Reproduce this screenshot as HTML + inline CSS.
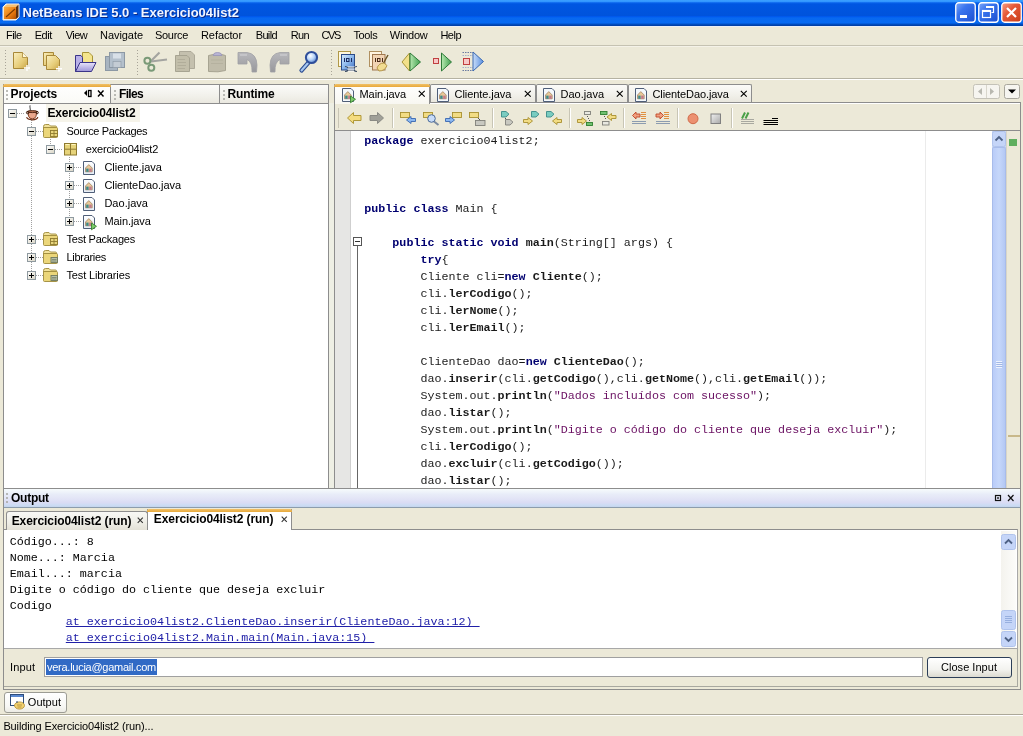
<!DOCTYPE html>
<html><head><meta charset="utf-8">
<style>
*{box-sizing:border-box;margin:0;padding:0}
body{will-change:transform}
html,body{width:1023px;height:736px;overflow:hidden;background:#ECE9D8;font-family:"Liberation Sans",sans-serif;font-size:11px;color:#000;position:relative}
.a{position:absolute}
.t{position:absolute;white-space:pre;line-height:1}
svg{position:absolute;overflow:visible}
.code{position:absolute;white-space:pre;font-family:"Liberation Mono",monospace;font-size:11.695px;line-height:17px;color:#1A1A1A}
.k{color:#000070;font-weight:bold}
.b{font-weight:bold}
.s{color:#6A1062}
.o{position:absolute;white-space:pre;font-family:"Liberation Mono",monospace;font-size:11.69px;line-height:16px;color:#000}
.lnk{color:#2020A8;text-decoration:underline;text-decoration-skip-ink:none;text-underline-offset:1px}
</style></head><body>

<div class="a" style="left:0px;top:0px;width:1023px;height:26px;background:linear-gradient(#3CA0FF 0px,#3296FF 1.5px,#0A64EC 2.8px,#0056E2 4px,#0053DC 16px,#005AF0 16.6px,#0868F0 18px,#066AF2 23px,#0050C8 24px,#003A9C 26px);"></div>
<div class="a" style="left:0px;top:26px;width:1023px;height:1px;background:#EAEEF6;"></div>
<div class="t" style="left:22.5px;top:6.10px;font-size:13px;font-weight:700;color:#F2F6FF;letter-spacing:-0.008px;text-shadow:1px 1px 0 #0A2A8A;">NetBeans IDE 5.0 - Exercicio04list2</div>
<svg style="left:2px;top:3px" width="18" height="19"><defs><linearGradient id="cube" x1="0" y1="0" x2="1" y2="1"><stop offset="0" stop-color="#FFB040"/><stop offset="0.6" stop-color="#E87A10"/><stop offset="1" stop-color="#B05000"/></linearGradient></defs><path d="M1 4 L4 1 H17 V14 L14 17 H1 Z" fill="#E8E0D0" stroke="#F8F4EC" stroke-width="1"/><rect x="2" y="4" width="12" height="12" fill="url(#cube)"/><path d="M2 4 L5 1.5 H16.5 L14 4 Z" fill="#F8C070"/><path d="M14 4 L16.5 1.5 V14 L14 16 Z" fill="#5A3010"/><path d="M4 14 L13 6" stroke="#7A3A00" stroke-width="1.2"/></svg>
<svg style="left:955px;top:2px" width="21" height="21"><defs><linearGradient id="bbtn" x1="0" y1="0" x2="1" y2="1"><stop offset="0" stop-color="#7FA8F8"/><stop offset="0.35" stop-color="#3A75EE"/><stop offset="1" stop-color="#1C4FD0"/></linearGradient><linearGradient id="rbtn" x1="0" y1="0" x2="1" y2="1"><stop offset="0" stop-color="#F8A088"/><stop offset="0.4" stop-color="#E65A38"/><stop offset="1" stop-color="#C83C18"/></linearGradient></defs><rect x="0.75" y="0.75" width="19.5" height="19.5" rx="3" fill="url(#bbtn)" stroke="#FFFFFF" stroke-width="1.3"/><rect x="5" y="13" width="7" height="3" fill="#FFFFFF"/></svg>
<svg style="left:978px;top:2px" width="21" height="21"><defs><linearGradient id="bbtn" x1="0" y1="0" x2="1" y2="1"><stop offset="0" stop-color="#7FA8F8"/><stop offset="0.35" stop-color="#3A75EE"/><stop offset="1" stop-color="#1C4FD0"/></linearGradient><linearGradient id="rbtn" x1="0" y1="0" x2="1" y2="1"><stop offset="0" stop-color="#F8A088"/><stop offset="0.4" stop-color="#E65A38"/><stop offset="1" stop-color="#C83C18"/></linearGradient></defs><rect x="0.75" y="0.75" width="19.5" height="19.5" rx="3" fill="url(#bbtn)" stroke="#FFFFFF" stroke-width="1.3"/><path d="M8.5 4.5 H15.5 V10.5 H13.5" fill="none" stroke="#FFFFFF" stroke-width="1.2"/><rect x="8" y="4" width="8" height="2" fill="#fff"/><rect x="4.5" y="8.5" width="8" height="7" fill="none" stroke="#FFFFFF" stroke-width="1.2"/><rect x="4" y="8" width="9" height="2" fill="#fff"/></svg>
<svg style="left:1001px;top:2px" width="21" height="21"><defs><linearGradient id="bbtn" x1="0" y1="0" x2="1" y2="1"><stop offset="0" stop-color="#7FA8F8"/><stop offset="0.35" stop-color="#3A75EE"/><stop offset="1" stop-color="#1C4FD0"/></linearGradient><linearGradient id="rbtn" x1="0" y1="0" x2="1" y2="1"><stop offset="0" stop-color="#F8A088"/><stop offset="0.4" stop-color="#E65A38"/><stop offset="1" stop-color="#C83C18"/></linearGradient></defs><rect x="0.75" y="0.75" width="19.5" height="19.5" rx="3" fill="url(#rbtn)" stroke="#FFFFFF" stroke-width="1.3"/><path d="M6 6 L15 15 M15 6 L6 15" stroke="#FFFFFF" stroke-width="2.2"/></svg>
<div class="t" style="left:6px;top:30.19px;font-size:11px;font-weight:400;color:#000;letter-spacing:-0.534px;">File</div>
<div class="t" style="left:34.7px;top:30.19px;font-size:11px;font-weight:400;color:#000;letter-spacing:-0.417px;">Edit</div>
<div class="t" style="left:65.7px;top:30.19px;font-size:11px;font-weight:400;color:#000;letter-spacing:-0.539px;">View</div>
<div class="t" style="left:100px;top:30.19px;font-size:11px;font-weight:400;color:#000;letter-spacing:-0.053px;">Navigate</div>
<div class="t" style="left:155px;top:30.19px;font-size:11px;font-weight:400;color:#000;letter-spacing:-0.310px;">Source</div>
<div class="t" style="left:201px;top:30.19px;font-size:11px;font-weight:400;color:#000;letter-spacing:-0.072px;">Refactor</div>
<div class="t" style="left:255.7px;top:30.19px;font-size:11px;font-weight:400;color:#000;letter-spacing:-0.634px;">Build</div>
<div class="t" style="left:290.7px;top:30.19px;font-size:11px;font-weight:400;color:#000;letter-spacing:-0.629px;">Run</div>
<div class="t" style="left:321.4px;top:30.19px;font-size:11px;font-weight:400;color:#000;letter-spacing:-1.342px;">CVS</div>
<div class="t" style="left:353.4px;top:30.19px;font-size:11px;font-weight:400;color:#000;letter-spacing:-0.338px;">Tools</div>
<div class="t" style="left:389.8px;top:30.19px;font-size:11px;font-weight:400;color:#000;letter-spacing:-0.237px;">Window</div>
<div class="t" style="left:440.4px;top:30.19px;font-size:11px;font-weight:400;color:#000;letter-spacing:-0.506px;">Help</div>
<div class="a" style="left:0px;top:45px;width:1023px;height:1px;background:#C5C2B2;"></div>
<div class="a" style="left:0px;top:46px;width:1023px;height:1px;background:#F4F2E8;"></div>
<div class="a" style="left:0px;top:47px;width:1023px;height:31px;background:#ECE9D8;"></div>
<div class="a" style="left:0px;top:78px;width:1023px;height:1px;background:#B5B2A2;"></div>
<div class="a" style="left:0px;top:79px;width:1023px;height:1px;background:#FFFFFF;"></div>
<div class="a" style="left:5px;top:50px;width:1px;height:1px;background:#A8A498;"></div>
<div class="a" style="left:5px;top:53px;width:1px;height:1px;background:#A8A498;"></div>
<div class="a" style="left:5px;top:56px;width:1px;height:1px;background:#A8A498;"></div>
<div class="a" style="left:5px;top:59px;width:1px;height:1px;background:#A8A498;"></div>
<div class="a" style="left:5px;top:62px;width:1px;height:1px;background:#A8A498;"></div>
<div class="a" style="left:5px;top:65px;width:1px;height:1px;background:#A8A498;"></div>
<div class="a" style="left:5px;top:68px;width:1px;height:1px;background:#A8A498;"></div>
<div class="a" style="left:5px;top:71px;width:1px;height:1px;background:#A8A498;"></div>
<div class="a" style="left:5px;top:74px;width:1px;height:1px;background:#A8A498;"></div>
<div class="a" style="left:137px;top:50px;width:1px;height:1px;background:#A8A498;"></div>
<div class="a" style="left:137px;top:53px;width:1px;height:1px;background:#A8A498;"></div>
<div class="a" style="left:137px;top:56px;width:1px;height:1px;background:#A8A498;"></div>
<div class="a" style="left:137px;top:59px;width:1px;height:1px;background:#A8A498;"></div>
<div class="a" style="left:137px;top:62px;width:1px;height:1px;background:#A8A498;"></div>
<div class="a" style="left:137px;top:65px;width:1px;height:1px;background:#A8A498;"></div>
<div class="a" style="left:137px;top:68px;width:1px;height:1px;background:#A8A498;"></div>
<div class="a" style="left:137px;top:71px;width:1px;height:1px;background:#A8A498;"></div>
<div class="a" style="left:137px;top:74px;width:1px;height:1px;background:#A8A498;"></div>
<div class="a" style="left:331px;top:50px;width:1px;height:1px;background:#A8A498;"></div>
<div class="a" style="left:331px;top:53px;width:1px;height:1px;background:#A8A498;"></div>
<div class="a" style="left:331px;top:56px;width:1px;height:1px;background:#A8A498;"></div>
<div class="a" style="left:331px;top:59px;width:1px;height:1px;background:#A8A498;"></div>
<div class="a" style="left:331px;top:62px;width:1px;height:1px;background:#A8A498;"></div>
<div class="a" style="left:331px;top:65px;width:1px;height:1px;background:#A8A498;"></div>
<div class="a" style="left:331px;top:68px;width:1px;height:1px;background:#A8A498;"></div>
<div class="a" style="left:331px;top:71px;width:1px;height:1px;background:#A8A498;"></div>
<div class="a" style="left:331px;top:74px;width:1px;height:1px;background:#A8A498;"></div>
<svg style="left:0;top:0;width:0;height:0"><defs><linearGradient id="gold" x1="0" y1="0" x2="1" y2="1"><stop offset="0" stop-color="#FBF0C0"/><stop offset="0.6" stop-color="#E6CC78"/><stop offset="1" stop-color="#C8A448"/></linearGradient><linearGradient id="lav" x1="0" y1="0" x2="0" y2="1"><stop offset="0" stop-color="#E8E4FA"/><stop offset="1" stop-color="#9C94D8"/></linearGradient><linearGradient id="blu" x1="0" y1="0" x2="1" y2="1"><stop offset="0" stop-color="#A8C8F0"/><stop offset="1" stop-color="#3E70C0"/></linearGradient><linearGradient id="grn" x1="0" y1="0" x2="1" y2="0"><stop offset="0" stop-color="#B8E8B0"/><stop offset="1" stop-color="#40A050"/></linearGradient><linearGradient id="bltri" x1="0" y1="0" x2="1" y2="0"><stop offset="0" stop-color="#C8DCF8"/><stop offset="1" stop-color="#5A90E0"/></linearGradient><radialGradient id="lens" cx="0.4" cy="0.35" r="0.7"><stop offset="0" stop-color="#FFFFFF"/><stop offset="0.5" stop-color="#B8D4F8"/><stop offset="1" stop-color="#4A78C8"/></radialGradient></defs></svg>
<svg style="left:13px;top:52px" width="18" height="19"><path d="M0.5 0.5 H9.5 L14.5 5.5 V16.5 H0.5 Z" fill="url(#gold)" stroke="#A88838"/><path d="M9.5 0.5 V5.5 H14.5" fill="#FFF8D8" stroke="#A88838" stroke-width="0.8"/><path d="M14 13 V19 M11 16 H17" stroke="#FFFFFF" stroke-width="1.4"/></svg>
<svg style="left:43px;top:52px" width="20" height="19"><path d="M0.5 0.5 H10.5 V13.5 H0.5 Z" fill="url(#gold)" stroke="#A88838"/><path d="M3.5 3.5 H12.5 L16.5 7.5 V17.5 H3.5 Z" fill="url(#gold)" stroke="#A88838"/><path d="M16 14 V19.5 M13 16.8 H19" stroke="#FFFFFF" stroke-width="1.4"/></svg>
<svg style="left:75px;top:52px" width="22" height="21"><path d="M7.5 0.5 H14 L17.5 4 V12.5 H7.5 Z" fill="#F4E48C" stroke="#A89438"/><path d="M0.5 3.5 H6 L7.5 5.5 V19.5 H0.5 Z" fill="#B8B0E8" stroke="#3A3488"/><path d="M0.5 19.5 L5 10.5 H21 L16.5 19.5 Z" fill="url(#lav)" stroke="#3A3488"/></svg>
<svg style="left:105px;top:52px" width="21" height="19"><rect x="0.5" y="4.5" width="12" height="14" fill="#A8B4C0" stroke="#8C98A4"/><rect x="4.5" y="0.5" width="15" height="15" fill="#B4C0CC" stroke="#8C98A4"/><rect x="8" y="1.5" width="8" height="5" fill="#D8E0E8"/><rect x="8" y="9.5" width="8" height="6" fill="#C4CCD4" stroke="#8C98A4" stroke-width="0.6"/></svg>
<svg style="left:140px;top:48px" width="30" height="26"><path d="M10.5 13.5 L19.5 4.5" stroke="#A4A4A0" stroke-width="2.2"/><path d="M11 13.5 L27 11.5" stroke="#A4A4A0" stroke-width="2"/><circle cx="7.4" cy="12.7" r="3" fill="none" stroke="#7A9A78" stroke-width="2"/><circle cx="11.3" cy="19.8" r="3" fill="none" stroke="#7A9A78" stroke-width="2"/></svg>
<svg style="left:170px;top:47px" width="30" height="29"><path d="M9.5 4.5 H21 L24.5 8 V21.5 H9.5 Z" fill="#C4C0AE" stroke="#A8A494" stroke-width="0.9"/><path d="M5.5 8.5 H17 L19.5 11 V24.5 H5.5 Z" fill="#C2BEAA" stroke="#A29E8C" stroke-width="0.9"/><path d="M7.5 12.5 H15 M7.5 15.5 H16 M7.5 18.5 H16 M7.5 21.5 H15" stroke="#ACA896" stroke-width="0.8"/></svg>
<svg style="left:206px;top:47px" width="24" height="29"><path d="M2.5 8.5 L12 6.5 L19.5 8.5 V23.5 L12 24.8 L2.5 24.5 Z" fill="#C0BCAA" stroke="#A29E8C" stroke-width="0.9"/><path d="M7 8.5 Q8 5 11.5 5.5 Q15 5 16 8.5 Z" fill="#B8B4D4" stroke="#9894B8" stroke-width="0.8"/><path d="M5 13 H17 M5 16.5 H17" stroke="#B2AE9C" stroke-width="0.8"/></svg>
<svg style="left:234px;top:47px" width="30" height="29"><defs><linearGradient id="und" x1="0" y1="0" x2="0" y2="1"><stop offset="0" stop-color="#B8B8BC"/><stop offset="1" stop-color="#98989C"/></linearGradient></defs><path d="M4 5.5 H13 Q22.5 6.5 23 18 L22.5 25 H18 Q18.5 15 13 12.5 V17 H4 Z" fill="url(#und)" stroke="#A0A0A4" stroke-width="0.8"/><path d="M6 8 H13" stroke="#D0D0D4" stroke-width="1.2"/></svg>
<svg style="left:264px;top:47px" width="30" height="29"><g transform="translate(29,0) scale(-1,1)"><path d="M4 5.5 H13 Q22.5 6.5 23 18 L22.5 25 H18 Q18.5 15 13 12.5 V17 H4 Z" fill="url(#und)" stroke="#A0A0A4" stroke-width="0.8"/><path d="M6 8 H13" stroke="#D0D0D4" stroke-width="1.2"/></g></svg>
<svg style="left:296px;top:47px" width="28" height="29"><path d="M5.5 23.5 L12.5 15.5" stroke="#2A4A90" stroke-width="4.2" stroke-linecap="round"/><path d="M5.5 23.5 L12.5 15.5" stroke="#A8C8F0" stroke-width="2" stroke-linecap="round"/><circle cx="15.5" cy="10.5" r="5.6" fill="url(#lens)" stroke="#2E4E9A" stroke-width="2"/></svg>
<svg style="left:334px;top:47px" width="28" height="28"><defs><linearGradient id="bd" x1="0" y1="0" x2="1" y2="1"><stop offset="0" stop-color="#D8ECFC"/><stop offset="0.5" stop-color="#8CB8EC"/><stop offset="1" stop-color="#3A6CC0"/></linearGradient></defs><rect x="4.5" y="4.5" width="12" height="15" fill="#FFF8E0" stroke="#B09848"/><rect x="7.5" y="7.5" width="13" height="15.5" fill="url(#bd)" stroke="#2A4A88"/><path d="M10.5 11 V15 M17.5 11 V15" stroke="#1A2A60" stroke-width="1" fill="none"/><rect x="12.5" y="11.5" width="2.5" height="3" stroke="#1A2A60" stroke-width="1" fill="none"/><path d="M11 19.5 Q13.5 19.5 14 21 H20 Q20.5 19.5 23 19.5 M11 24.5 Q13.5 24.5 14 23 H20 Q20.5 24.5 23 24.5" stroke="#3A4A60" stroke-width="1.1" fill="#FFFFFF"/><rect x="13.5" y="21.5" width="7" height="1.2" fill="#FFFFFF"/></svg>
<svg style="left:365px;top:47px" width="28" height="28"><rect x="4.5" y="4.5" width="12" height="15" fill="#FFF4E0" stroke="#B09060"/><rect x="7.5" y="7.5" width="12.5" height="15.5" fill="#F2D4B4" stroke="#A07850"/><path d="M10.5 11 V15 M17.5 11 V15" stroke="#4A2A18" stroke-width="1" fill="none"/><rect x="12.5" y="11.5" width="2.5" height="3" stroke="#4A2A18" stroke-width="1" fill="none"/><path d="M23 8 L18 17" stroke="#6A5020" stroke-width="1.4"/><path d="M12 21 Q14 16 19 16 L22 18.5 Q20 24 14 24 Z" fill="#F2DC90" stroke="#B09040" stroke-width="0.9"/></svg>
<svg style="left:401px;top:52px" width="21" height="20"><path d="M8.5 1 L1 10 L8.5 19 Z" fill="#F2E08A" stroke="#A89438"/><path d="M9 1 L19.5 10 L9 19 Z" fill="url(#grn)" stroke="#2E7A38"/></svg>
<svg style="left:432px;top:52px" width="20" height="20"><rect x="1.5" y="6.5" width="5" height="5" fill="#F8C8C8" stroke="#C04040"/><path d="M9.5 1 L19.5 10 L9.5 19 Z" fill="url(#grn)" stroke="#2E7A38"/></svg>
<svg style="left:462px;top:51px" width="23" height="22"><path d="M0.5 1.5 H11 M0.5 19.5 H11" stroke="#6A7AA0" stroke-dasharray="1.5 1"/><path d="M0.5 4.5 H11 M0.5 16.5 H11" stroke="#A8B0C8" stroke-dasharray="1.5 1"/><rect x="1.5" y="7.5" width="6" height="6" fill="#F8C8C8" stroke="#C04040"/><path d="M11 1 L21.5 10.5 L11 20 Z" fill="url(#bltri)" stroke="#3A68B0"/></svg>
<div class="a" style="left:3px;top:103px;width:326px;height:386px;background:#FFFFFF;border:1px solid #8D8D8D;"></div>
<div class="a" style="left:110px;top:84px;width:110px;height:20px;background:linear-gradient(#FBFBF9,#F1F0EA 60%,#E9E7DE);border:1px solid #8D8D8D;border-bottom:none;border-radius:1px 1px 0 0;"></div>
<div class="a" style="left:219px;top:84px;width:110px;height:20px;background:linear-gradient(#FBFBF9,#F1F0EA 60%,#E9E7DE);border:1px solid #8D8D8D;border-bottom:none;border-radius:1px 1px 0 0;"></div>
<div class="a" style="left:3px;top:84px;width:108px;height:20px;background:linear-gradient(#FFFFFF,#FAFAF6);border-left:1px solid #8D8D8D;border-right:1px solid #8D8D8D;"></div>
<div class="a" style="left:3px;top:84px;width:108px;height:3px;background:linear-gradient(#F0C068,#E8A93A);border-radius:2px 2px 0 0;"></div>
<div class="a" style="left:3px;top:103px;width:107px;height:1px;background:#8D8D8D;"></div>
<div class="a" style="left:110px;top:103px;width:219px;height:1px;background:#8D8D8D;"></div>
<div class="a" style="left:6px;top:90px;width:2px;height:2px;background:#A6A6A0;border-radius:1px;"></div>
<div class="a" style="left:6px;top:94px;width:2px;height:2px;background:#A6A6A0;border-radius:1px;"></div>
<div class="a" style="left:6px;top:98px;width:2px;height:2px;background:#A6A6A0;border-radius:1px;"></div>
<div class="a" style="left:114px;top:90px;width:2px;height:2px;background:#A6A6A0;border-radius:1px;"></div>
<div class="a" style="left:114px;top:94px;width:2px;height:2px;background:#A6A6A0;border-radius:1px;"></div>
<div class="a" style="left:114px;top:98px;width:2px;height:2px;background:#A6A6A0;border-radius:1px;"></div>
<div class="a" style="left:223px;top:90px;width:2px;height:2px;background:#A6A6A0;border-radius:1px;"></div>
<div class="a" style="left:223px;top:94px;width:2px;height:2px;background:#A6A6A0;border-radius:1px;"></div>
<div class="a" style="left:223px;top:98px;width:2px;height:2px;background:#A6A6A0;border-radius:1px;"></div>
<div class="t" style="left:10.6px;top:88.14px;font-size:12px;font-weight:700;color:#000;letter-spacing:-0.107px;">Projects</div>
<div class="t" style="left:119px;top:88.14px;font-size:12px;font-weight:700;color:#000;letter-spacing:-0.672px;">Files</div>
<div class="t" style="left:227.5px;top:88.14px;font-size:12px;font-weight:700;color:#000;letter-spacing:-0.143px;">Runtime</div>
<svg style="left:83px;top:89px" width="24" height="10"><path d="M1 4 L4 1 L4 7 Z" fill="#000"/><rect x="5.5" y="1.5" width="2.5" height="6" fill="none" stroke="#000" stroke-width="1.3"/><path d="M15 1.5 L20.5 7.5 M20.5 1.5 L15 7.5" stroke="#000" stroke-width="1.4"/></svg>
<div class="a" style="left:31px;top:120px;width:1px;height:156px;background:repeating-linear-gradient(#A0A0A0 0 1px,transparent 1px 2px);"></div>
<div class="a" style="left:50px;top:139px;width:1px;height:11px;background:repeating-linear-gradient(#A0A0A0 0 1px,transparent 1px 2px);"></div>
<div class="a" style="left:69px;top:157px;width:1px;height:65px;background:repeating-linear-gradient(#A0A0A0 0 1px,transparent 1px 2px);"></div>
<svg style="left:8px;top:109px" width="9" height="9"><defs><linearGradient id="bg8_109" x1="0" y1="0" x2="1" y2="1"><stop offset="0" stop-color="#fff"/><stop offset="1" stop-color="#D8D4C4"/></linearGradient></defs><rect x="0.5" y="0.5" width="8" height="8" fill="url(#bg8_109)" stroke="#8F9AA0"/><path d="M2 4.5 H7" stroke="#000" stroke-width="1"/></svg>
<div class="a" style="left:17px;top:113px;width:8px;height:1px;background:repeating-linear-gradient(90deg,#A0A0A0 0 1px,transparent 1px 2px);"></div>
<div class="a" style="left:46px;top:104px;width:94px;height:18px;background:#F6F4EA;"></div>
<div class="t" style="left:47.4px;top:106.84px;font-size:12px;font-weight:700;color:#000;letter-spacing:-0.171px;">Exercicio04list2</div>
<svg style="left:27px;top:127px" width="9" height="9"><defs><linearGradient id="bg27_127" x1="0" y1="0" x2="1" y2="1"><stop offset="0" stop-color="#fff"/><stop offset="1" stop-color="#D8D4C4"/></linearGradient></defs><rect x="0.5" y="0.5" width="8" height="8" fill="url(#bg27_127)" stroke="#8F9AA0"/><path d="M2 4.5 H7" stroke="#000" stroke-width="1"/></svg>
<div class="a" style="left:36px;top:131px;width:7px;height:1px;background:repeating-linear-gradient(90deg,#A0A0A0 0 1px,transparent 1px 2px);"></div>
<div class="t" style="left:66.5px;top:125.99px;font-size:11px;font-weight:400;color:#000;letter-spacing:-0.375px;">Source Packages</div>
<svg style="left:46px;top:145px" width="9" height="9"><defs><linearGradient id="bg46_145" x1="0" y1="0" x2="1" y2="1"><stop offset="0" stop-color="#fff"/><stop offset="1" stop-color="#D8D4C4"/></linearGradient></defs><rect x="0.5" y="0.5" width="8" height="8" fill="url(#bg46_145)" stroke="#8F9AA0"/><path d="M2 4.5 H7" stroke="#000" stroke-width="1"/></svg>
<div class="a" style="left:55px;top:149px;width:8px;height:1px;background:repeating-linear-gradient(90deg,#A0A0A0 0 1px,transparent 1px 2px);"></div>
<div class="t" style="left:85.8px;top:143.99px;font-size:11px;font-weight:400;color:#000;letter-spacing:-0.175px;">exercicio04list2</div>
<svg style="left:65px;top:163px" width="9" height="9"><defs><linearGradient id="bg65_163" x1="0" y1="0" x2="1" y2="1"><stop offset="0" stop-color="#fff"/><stop offset="1" stop-color="#D8D4C4"/></linearGradient></defs><rect x="0.5" y="0.5" width="8" height="8" fill="url(#bg65_163)" stroke="#8F9AA0"/><path d="M2 4.5 H7 M4.5 2 V7" stroke="#000" stroke-width="1"/></svg>
<div class="a" style="left:74px;top:167px;width:8px;height:1px;background:repeating-linear-gradient(90deg,#A0A0A0 0 1px,transparent 1px 2px);"></div>
<div class="t" style="left:104.4px;top:161.99px;font-size:11px;font-weight:400;color:#000;letter-spacing:0.010px;">Cliente.java</div>
<svg style="left:65px;top:181px" width="9" height="9"><defs><linearGradient id="bg65_181" x1="0" y1="0" x2="1" y2="1"><stop offset="0" stop-color="#fff"/><stop offset="1" stop-color="#D8D4C4"/></linearGradient></defs><rect x="0.5" y="0.5" width="8" height="8" fill="url(#bg65_181)" stroke="#8F9AA0"/><path d="M2 4.5 H7 M4.5 2 V7" stroke="#000" stroke-width="1"/></svg>
<div class="a" style="left:74px;top:185px;width:8px;height:1px;background:repeating-linear-gradient(90deg,#A0A0A0 0 1px,transparent 1px 2px);"></div>
<div class="t" style="left:104.4px;top:179.99px;font-size:11px;font-weight:400;color:#000;letter-spacing:-0.070px;">ClienteDao.java</div>
<svg style="left:65px;top:199px" width="9" height="9"><defs><linearGradient id="bg65_199" x1="0" y1="0" x2="1" y2="1"><stop offset="0" stop-color="#fff"/><stop offset="1" stop-color="#D8D4C4"/></linearGradient></defs><rect x="0.5" y="0.5" width="8" height="8" fill="url(#bg65_199)" stroke="#8F9AA0"/><path d="M2 4.5 H7 M4.5 2 V7" stroke="#000" stroke-width="1"/></svg>
<div class="a" style="left:74px;top:203px;width:8px;height:1px;background:repeating-linear-gradient(90deg,#A0A0A0 0 1px,transparent 1px 2px);"></div>
<div class="t" style="left:104.4px;top:197.99px;font-size:11px;font-weight:400;color:#000;letter-spacing:0.022px;">Dao.java</div>
<svg style="left:65px;top:217px" width="9" height="9"><defs><linearGradient id="bg65_217" x1="0" y1="0" x2="1" y2="1"><stop offset="0" stop-color="#fff"/><stop offset="1" stop-color="#D8D4C4"/></linearGradient></defs><rect x="0.5" y="0.5" width="8" height="8" fill="url(#bg65_217)" stroke="#8F9AA0"/><path d="M2 4.5 H7 M4.5 2 V7" stroke="#000" stroke-width="1"/></svg>
<div class="a" style="left:74px;top:221px;width:8px;height:1px;background:repeating-linear-gradient(90deg,#A0A0A0 0 1px,transparent 1px 2px);"></div>
<div class="t" style="left:104.4px;top:215.99px;font-size:11px;font-weight:400;color:#000;letter-spacing:-0.075px;">Main.java</div>
<svg style="left:27px;top:235px" width="9" height="9"><defs><linearGradient id="bg27_235" x1="0" y1="0" x2="1" y2="1"><stop offset="0" stop-color="#fff"/><stop offset="1" stop-color="#D8D4C4"/></linearGradient></defs><rect x="0.5" y="0.5" width="8" height="8" fill="url(#bg27_235)" stroke="#8F9AA0"/><path d="M2 4.5 H7 M4.5 2 V7" stroke="#000" stroke-width="1"/></svg>
<div class="a" style="left:36px;top:239px;width:7px;height:1px;background:repeating-linear-gradient(90deg,#A0A0A0 0 1px,transparent 1px 2px);"></div>
<div class="t" style="left:66.5px;top:233.99px;font-size:11px;font-weight:400;color:#000;letter-spacing:-0.234px;">Test Packages</div>
<svg style="left:27px;top:253px" width="9" height="9"><defs><linearGradient id="bg27_253" x1="0" y1="0" x2="1" y2="1"><stop offset="0" stop-color="#fff"/><stop offset="1" stop-color="#D8D4C4"/></linearGradient></defs><rect x="0.5" y="0.5" width="8" height="8" fill="url(#bg27_253)" stroke="#8F9AA0"/><path d="M2 4.5 H7 M4.5 2 V7" stroke="#000" stroke-width="1"/></svg>
<div class="a" style="left:36px;top:257px;width:7px;height:1px;background:repeating-linear-gradient(90deg,#A0A0A0 0 1px,transparent 1px 2px);"></div>
<div class="t" style="left:66.5px;top:251.99px;font-size:11px;font-weight:400;color:#000;letter-spacing:-0.299px;">Libraries</div>
<svg style="left:27px;top:271px" width="9" height="9"><defs><linearGradient id="bg27_271" x1="0" y1="0" x2="1" y2="1"><stop offset="0" stop-color="#fff"/><stop offset="1" stop-color="#D8D4C4"/></linearGradient></defs><rect x="0.5" y="0.5" width="8" height="8" fill="url(#bg27_271)" stroke="#8F9AA0"/><path d="M2 4.5 H7 M4.5 2 V7" stroke="#000" stroke-width="1"/></svg>
<div class="a" style="left:36px;top:275px;width:7px;height:1px;background:repeating-linear-gradient(90deg,#A0A0A0 0 1px,transparent 1px 2px);"></div>
<div class="t" style="left:66.5px;top:269.99px;font-size:11px;font-weight:400;color:#000;letter-spacing:-0.137px;">Test Libraries</div>
<svg style="left:22px;top:102px" width="20" height="22"><path d="M8.3 3.3 C6.8 5 9.3 6.5 8 9" stroke="#555" stroke-width="1.1" fill="none"/><path d="M5.8 9.5 H14.8 L14 14.3 Q13.2 16.8 10.3 16.8 Q7.4 16.8 6.6 14.3 Z" fill="#E9A78C" stroke="#7A3418" stroke-width="0.9"/><ellipse cx="10.3" cy="9.6" rx="4.8" ry="1" fill="#B87050" stroke="#4A2010" stroke-width="0.9"/><circle cx="5.6" cy="10.6" r="1.2" fill="none" stroke="#3A1A0A" stroke-width="1"/><circle cx="15.1" cy="10.6" r="1.2" fill="none" stroke="#3A1A0A" stroke-width="1"/><path d="M4.6 15.2 Q5.3 17.8 10.3 17.8 Q15.3 17.8 15.8 15.2" stroke="#6A2A10" stroke-width="1.2" fill="none"/></svg>
<svg style="left:43px;top:124px" width="16" height="14"><path d="M0.5 2.5 Q0.5 0.5 2.5 0.5 H6 L7.5 2 H12.5 Q13.5 2 13.5 3 V4 H0.5 Z" fill="#F2E29A" stroke="#9E8A3A" stroke-width="0.9"/><path d="M0.5 3.5 H13.5 Q14.5 3.5 14.5 4.5 V12.5 Q14.5 13.5 13.5 13.5 H1.5 Q0.5 13.5 0.5 12.5 Z" fill="#EBD67A" stroke="#9E8A3A" stroke-width="0.9"/><rect x="7.5" y="6.5" width="7" height="6" fill="#E9D77E" stroke="#8E7A30" stroke-width="0.9"/><path d="M11 6.5 V12.5 M7.5 9.5 H14.5" stroke="#8E7A30" stroke-width="0.9"/></svg>
<svg style="left:64px;top:143px" width="14" height="13"><rect x="0.5" y="0.5" width="12" height="11.5" fill="#E6D37A" stroke="#8E7A30" stroke-width="1"/><path d="M6.5 0.5 V12 M0.5 6.2 H12.5" stroke="#8E7A30" stroke-width="1"/><path d="M1.5 1.5 H5.5 M7.5 1.5 H11.5" stroke="#FFF6C0" stroke-width="1"/></svg>
<svg style="left:83px;top:161px" width="14" height="15"><defs><linearGradient id="pg" x1="0" y1="0" x2="0" y2="1"><stop offset="0" stop-color="#FFFFFF"/><stop offset="1" stop-color="#E4ECF6"/></linearGradient></defs><path d="M0.5 0.5 H9 L11.5 3 V13.5 H0.5 Z" fill="url(#pg)" stroke="#4F5E78" stroke-width="1"/><path d="M2.5 10.8 V7 L5.8 3.6 L9.2 7 V10.8 Z" fill="#E8C898" stroke="#9A7A58" stroke-width="0.7"/><rect x="3.2" y="7.6" width="2.4" height="3.2" fill="#3E8A8A"/><rect x="6.2" y="7.6" width="2.4" height="3.2" fill="#C27A8C"/></svg>
<svg style="left:83px;top:179px" width="14" height="15"><defs><linearGradient id="pg" x1="0" y1="0" x2="0" y2="1"><stop offset="0" stop-color="#FFFFFF"/><stop offset="1" stop-color="#E4ECF6"/></linearGradient></defs><path d="M0.5 0.5 H9 L11.5 3 V13.5 H0.5 Z" fill="url(#pg)" stroke="#4F5E78" stroke-width="1"/><path d="M2.5 10.8 V7 L5.8 3.6 L9.2 7 V10.8 Z" fill="#E8C898" stroke="#9A7A58" stroke-width="0.7"/><rect x="3.2" y="7.6" width="2.4" height="3.2" fill="#3E8A8A"/><rect x="6.2" y="7.6" width="2.4" height="3.2" fill="#C27A8C"/></svg>
<svg style="left:83px;top:197px" width="14" height="15"><defs><linearGradient id="pg" x1="0" y1="0" x2="0" y2="1"><stop offset="0" stop-color="#FFFFFF"/><stop offset="1" stop-color="#E4ECF6"/></linearGradient></defs><path d="M0.5 0.5 H9 L11.5 3 V13.5 H0.5 Z" fill="url(#pg)" stroke="#4F5E78" stroke-width="1"/><path d="M2.5 10.8 V7 L5.8 3.6 L9.2 7 V10.8 Z" fill="#E8C898" stroke="#9A7A58" stroke-width="0.7"/><rect x="3.2" y="7.6" width="2.4" height="3.2" fill="#3E8A8A"/><rect x="6.2" y="7.6" width="2.4" height="3.2" fill="#C27A8C"/></svg>
<svg style="left:83px;top:215px" width="14" height="15"><defs><linearGradient id="pg" x1="0" y1="0" x2="0" y2="1"><stop offset="0" stop-color="#FFFFFF"/><stop offset="1" stop-color="#E4ECF6"/></linearGradient></defs><path d="M0.5 0.5 H9 L11.5 3 V13.5 H0.5 Z" fill="url(#pg)" stroke="#4F5E78" stroke-width="1"/><path d="M2.5 10.8 V7 L5.8 3.6 L9.2 7 V10.8 Z" fill="#E8C898" stroke="#9A7A58" stroke-width="0.7"/><rect x="3.2" y="7.6" width="2.4" height="3.2" fill="#3E8A8A"/><rect x="6.2" y="7.6" width="2.4" height="3.2" fill="#C27A8C"/><path d="M8.5 8 L13.5 11.3 L8.5 14.8 Z" fill="#7CCB6A" stroke="#2E7A28" stroke-width="0.8"/></svg>
<svg style="left:43px;top:232px" width="16" height="14"><path d="M0.5 2.5 Q0.5 0.5 2.5 0.5 H6 L7.5 2 H12.5 Q13.5 2 13.5 3 V4 H0.5 Z" fill="#F2E29A" stroke="#9E8A3A" stroke-width="0.9"/><path d="M0.5 3.5 H13.5 Q14.5 3.5 14.5 4.5 V12.5 Q14.5 13.5 13.5 13.5 H1.5 Q0.5 13.5 0.5 12.5 Z" fill="#EBD67A" stroke="#9E8A3A" stroke-width="0.9"/><rect x="7.5" y="6.5" width="7" height="6" fill="#E9D77E" stroke="#8E7A30" stroke-width="0.9"/><path d="M11 6.5 V12.5 M7.5 9.5 H14.5" stroke="#8E7A30" stroke-width="0.9"/></svg>
<svg style="left:43px;top:250px" width="16" height="14"><path d="M0.5 2.5 Q0.5 0.5 2.5 0.5 H6 L7.5 2 H12.5 Q13.5 2 13.5 3 V4 H0.5 Z" fill="#F2E29A" stroke="#9E8A3A" stroke-width="0.9"/><path d="M0.5 3.5 H13.5 Q14.5 3.5 14.5 4.5 V12.5 Q14.5 13.5 13.5 13.5 H1.5 Q0.5 13.5 0.5 12.5 Z" fill="#EBD67A" stroke="#9E8A3A" stroke-width="0.9"/><rect x="8" y="7.5" width="6.5" height="5" fill="#B8C0A8" stroke="#6E7A60" stroke-width="0.9"/><path d="M9 9.5 H13.5 M9 11 H13.5" stroke="#6E7A60" stroke-width="0.7"/></svg>
<svg style="left:43px;top:268px" width="16" height="14"><path d="M0.5 2.5 Q0.5 0.5 2.5 0.5 H6 L7.5 2 H12.5 Q13.5 2 13.5 3 V4 H0.5 Z" fill="#F2E29A" stroke="#9E8A3A" stroke-width="0.9"/><path d="M0.5 3.5 H13.5 Q14.5 3.5 14.5 4.5 V12.5 Q14.5 13.5 13.5 13.5 H1.5 Q0.5 13.5 0.5 12.5 Z" fill="#EBD67A" stroke="#9E8A3A" stroke-width="0.9"/><rect x="8" y="7.5" width="6.5" height="5" fill="#B8C0A8" stroke="#6E7A60" stroke-width="0.9"/><path d="M9 9.5 H13.5 M9 11 H13.5" stroke="#6E7A60" stroke-width="0.7"/></svg>
<div class="a" style="left:329px;top:103px;width:5px;height:386px;background:#EEEFE4;"></div>
<div class="a" style="left:334px;top:102px;width:687px;height:387px;background:#ECE9D8;border:1px solid #8D8D8D;"></div>
<div class="a" style="left:335px;top:103px;width:685px;height:1px;background:#FFFFFF;"></div>
<div class="a" style="left:335px;top:130px;width:685px;height:1px;background:#8D8D8D;"></div>
<div class="a" style="left:335px;top:131px;width:657px;height:357px;background:#FFFFFF;"></div>
<div class="a" style="left:335px;top:131px;width:15px;height:357px;background:#E6E6E4;"></div>
<div class="a" style="left:350px;top:131px;width:1px;height:357px;background:#CFCFCF;"></div>
<div class="a" style="left:925px;top:131px;width:1px;height:357px;background:#EBEBEB;"></div>
<div class="a" style="left:992px;top:131px;width:14px;height:357px;background:#C8D6F4;"></div>
<div class="a" style="left:992px;top:147px;width:14px;height:341px;background:linear-gradient(90deg,#B9CCF8,#C6D7FA 50%,#B4C8F4);border:1px solid #A8BCEA;border-bottom:none;border-radius:2px 2px 0 0;"></div>
<svg style="left:992px;top:131px" width="14" height="16"><rect x="0.5" y="0.5" width="13" height="15" rx="2" fill="#C5D5F8" stroke="#B0C3EC"/><path d="M3.5 9.5 L7 6 L10.5 9.5" fill="none" stroke="#4D6185" stroke-width="1.8"/></svg>
<svg style="left:994px;top:360px" width="10" height="9"><path d="M2 1.5 H8 M2 3.5 H8 M2 5.5 H8 M2 7.5 H8" stroke="#EEF3FE" stroke-width="1"/><path d="M2.5 2.5 H8.5 M2.5 4.5 H8.5 M2.5 6.5 H8.5" stroke="#8CA4D8" stroke-width="0.6"/></svg>
<div class="a" style="left:1006px;top:131px;width:14px;height:357px;background:#ECE9D8;"></div>
<div class="a" style="left:1006px;top:131px;width:1px;height:357px;background:#D8D5C8;"></div>
<div class="a" style="left:1009px;top:139px;width:8px;height:7px;background:#5FAF5F;"></div>
<div class="a" style="left:1008px;top:435px;width:12px;height:2px;background:#C8B88A;"></div>
<svg style="left:353px;top:237px" width="9" height="252"><rect x="0.5" y="0.5" width="8" height="8" fill="#fff" stroke="#555"/><path d="M2 4.5 H7" stroke="#333"/><path d="M4.5 9 V252" stroke="#666"/></svg>
<div class="code" style="left:364.3px;top:132.60px"><span class="k">package</span> exercicio04list2;</div>
<div class="code" style="left:364.3px;top:200.60px"><span class="k">public</span> <span class="k">class</span> Main {</div>
<div class="code" style="left:364.3px;top:234.60px">    <span class="k">public</span> <span class="k">static</span> <span class="k">void</span> <span class="b">main</span>(String[] args) {</div>
<div class="code" style="left:364.3px;top:251.60px">        <span class="k">try</span>{</div>
<div class="code" style="left:364.3px;top:268.60px">        Cliente cli=<span class="k">new</span> <span class="b">Cliente</span>();</div>
<div class="code" style="left:364.3px;top:285.60px">        cli.<span class="b">lerCodigo</span>();</div>
<div class="code" style="left:364.3px;top:302.60px">        cli.<span class="b">lerNome</span>();</div>
<div class="code" style="left:364.3px;top:319.60px">        cli.<span class="b">lerEmail</span>();</div>
<div class="code" style="left:364.3px;top:353.60px">        ClienteDao dao=<span class="k">new</span> <span class="b">ClienteDao</span>();</div>
<div class="code" style="left:364.3px;top:370.60px">        dao.<span class="b">inserir</span>(cli.<span class="b">getCodigo</span>(),cli.<span class="b">getNome</span>(),cli.<span class="b">getEmail</span>());</div>
<div class="code" style="left:364.3px;top:387.60px">        System.out.<span class="b">println</span>(<span class="s">"Dados inclu&iacute;dos com sucesso"</span>);</div>
<div class="code" style="left:364.3px;top:404.60px">        dao.<span class="b">listar</span>();</div>
<div class="code" style="left:364.3px;top:421.60px">        System.out.<span class="b">println</span>(<span class="s">"Digite o c&oacute;digo do cliente que deseja excluir"</span>);</div>
<div class="code" style="left:364.3px;top:438.60px">        cli.<span class="b">lerCodigo</span>();</div>
<div class="code" style="left:364.3px;top:455.60px">        dao.<span class="b">excluir</span>(cli.<span class="b">getCodigo</span>());</div>
<div class="code" style="left:364.3px;top:472.60px">        dao.<span class="b">listar</span>();</div>
<div class="a" style="left:430px;top:84px;width:106px;height:18px;background:linear-gradient(#FBFBF9,#F1F0EA 60%,#E9E7DE);border:1px solid #8D8D8D;border-bottom:none;border-radius:2px 2px 0 0;"></div>
<svg style="left:437px;top:88px" width="14" height="15"><path d="M0.5 0.5 H9 L11.5 3 V13.5 H0.5 Z" fill="#F4F8FC" stroke="#4F5E78" stroke-width="1"/><path d="M2.5 10.8 V7 L5.8 3.6 L9.2 7 V10.8 Z" fill="#E8C898" stroke="#9A7A58" stroke-width="0.7"/><rect x="3.2" y="7.6" width="2.4" height="3.2" fill="#3E8A8A"/><rect x="6.2" y="7.6" width="2.4" height="3.2" fill="#C27A8C"/></svg>
<div class="t" style="left:454.5px;top:88.69px;font-size:11px;font-weight:400;color:#000;letter-spacing:-0.057px;">Cliente.java</div>
<svg style="left:524px;top:89.5px" width="8" height="8"><path d="M0.8 0.8 L6.7 6.7 M6.7 0.8 L0.8 6.7" stroke="#000" stroke-width="1.1"/></svg>
<div class="a" style="left:536px;top:84px;width:92px;height:18px;background:linear-gradient(#FBFBF9,#F1F0EA 60%,#E9E7DE);border:1px solid #8D8D8D;border-bottom:none;border-radius:2px 2px 0 0;"></div>
<svg style="left:543px;top:88px" width="14" height="15"><path d="M0.5 0.5 H9 L11.5 3 V13.5 H0.5 Z" fill="#F4F8FC" stroke="#4F5E78" stroke-width="1"/><path d="M2.5 10.8 V7 L5.8 3.6 L9.2 7 V10.8 Z" fill="#E8C898" stroke="#9A7A58" stroke-width="0.7"/><rect x="3.2" y="7.6" width="2.4" height="3.2" fill="#3E8A8A"/><rect x="6.2" y="7.6" width="2.4" height="3.2" fill="#C27A8C"/></svg>
<div class="t" style="left:560.5px;top:88.69px;font-size:11px;font-weight:400;color:#000;letter-spacing:0.022px;">Dao.java</div>
<svg style="left:616px;top:89.5px" width="8" height="8"><path d="M0.8 0.8 L6.7 6.7 M6.7 0.8 L0.8 6.7" stroke="#000" stroke-width="1.1"/></svg>
<div class="a" style="left:628px;top:84px;width:124px;height:18px;background:linear-gradient(#FBFBF9,#F1F0EA 60%,#E9E7DE);border:1px solid #8D8D8D;border-bottom:none;border-radius:2px 2px 0 0;"></div>
<svg style="left:635px;top:88px" width="14" height="15"><path d="M0.5 0.5 H9 L11.5 3 V13.5 H0.5 Z" fill="#F4F8FC" stroke="#4F5E78" stroke-width="1"/><path d="M2.5 10.8 V7 L5.8 3.6 L9.2 7 V10.8 Z" fill="#E8C898" stroke="#9A7A58" stroke-width="0.7"/><rect x="3.2" y="7.6" width="2.4" height="3.2" fill="#3E8A8A"/><rect x="6.2" y="7.6" width="2.4" height="3.2" fill="#C27A8C"/></svg>
<div class="t" style="left:652.5px;top:88.69px;font-size:11px;font-weight:400;color:#000;letter-spacing:-0.090px;">ClienteDao.java</div>
<svg style="left:740px;top:89.5px" width="8" height="8"><path d="M0.8 0.8 L6.7 6.7 M6.7 0.8 L0.8 6.7" stroke="#000" stroke-width="1.1"/></svg>
<div class="a" style="left:334px;top:84px;width:96px;height:20px;background:linear-gradient(#FFFFFF,#F8F7F1);border-left:1px solid #8D8D8D;border-right:1px solid #8D8D8D;"></div>
<div class="a" style="left:334px;top:84px;width:96px;height:3px;background:linear-gradient(#F0C068,#E8A93A);border-radius:2px 2px 0 0;"></div>
<svg style="left:342px;top:88px" width="14" height="15"><path d="M0.5 0.5 H9 L11.5 3 V13.5 H0.5 Z" fill="#F4F8FC" stroke="#4F5E78" stroke-width="1"/><path d="M2.5 10.8 V7 L5.8 3.6 L9.2 7 V10.8 Z" fill="#E8C898" stroke="#9A7A58" stroke-width="0.7"/><rect x="3.2" y="7.6" width="2.4" height="3.2" fill="#3E8A8A"/><rect x="6.2" y="7.6" width="2.4" height="3.2" fill="#C27A8C"/><path d="M8.5 8 L13.5 11.3 L8.5 14.8 Z" fill="#7CCB6A" stroke="#2E7A28" stroke-width="0.8"/></svg>
<div class="t" style="left:359.5px;top:88.69px;font-size:11px;font-weight:400;color:#000;letter-spacing:-0.053px;">Main.java</div>
<svg style="left:418px;top:89.5px" width="8" height="8"><path d="M0.8 0.8 L6.7 6.7 M6.7 0.8 L0.8 6.7" stroke="#000" stroke-width="1.1"/></svg>
<div class="a" style="left:430px;top:102px;width:591px;height:1px;background:#8D8D8D;"></div>
<svg style="left:973px;top:84px" width="48" height="16"><rect x="0.5" y="0.5" width="26" height="14" rx="2" fill="#F6F5F0" stroke="#C4C2B8"/><path d="M13.5 1 V14" stroke="#D8D6CC"/><path d="M9 4 L5 7.5 L9 11 Z" fill="#B8B8B0"/><path d="M17 4 L21 7.5 L17 11 Z" fill="#B8B8B0"/><rect x="31.5" y="0.5" width="15" height="14" rx="2" fill="#F6F5F0" stroke="#A8A69C"/><path d="M35 5.5 H43 L39 9.5 Z" fill="#000"/></svg>
<div class="a" style="left:338px;top:108px;width:1px;height:20px;background:#C8C5B5;"></div>
<div class="a" style="left:392px;top:108px;width:1px;height:20px;background:#C8C5B5;"></div>
<div class="a" style="left:393px;top:108px;width:1px;height:20px;background:#FFFFFF;"></div>
<div class="a" style="left:492px;top:108px;width:1px;height:20px;background:#C8C5B5;"></div>
<div class="a" style="left:493px;top:108px;width:1px;height:20px;background:#FFFFFF;"></div>
<div class="a" style="left:569px;top:108px;width:1px;height:20px;background:#C8C5B5;"></div>
<div class="a" style="left:570px;top:108px;width:1px;height:20px;background:#FFFFFF;"></div>
<div class="a" style="left:623px;top:108px;width:1px;height:20px;background:#C8C5B5;"></div>
<div class="a" style="left:624px;top:108px;width:1px;height:20px;background:#FFFFFF;"></div>
<div class="a" style="left:677px;top:108px;width:1px;height:20px;background:#C8C5B5;"></div>
<div class="a" style="left:678px;top:108px;width:1px;height:20px;background:#FFFFFF;"></div>
<div class="a" style="left:731px;top:108px;width:1px;height:20px;background:#C8C5B5;"></div>
<div class="a" style="left:732px;top:108px;width:1px;height:20px;background:#FFFFFF;"></div>
<svg style="left:0;top:0" width="1023" height="136"><path d="M347.5 118 L353.5 112.5 V115.5 H361 V120.5 H353.5 V123.5 Z" fill="#F4DC80" stroke="#B09838" stroke-width="1"/><path d="M383.5 118 L377.5 112.5 V115.5 H370 V120.5 H377.5 V123.5 Z" fill="#A0A098" stroke="#8A8A84" stroke-width="1"/><rect x="400.5" y="112.5" width="9" height="5" fill="#F2DC84" stroke="#A89030" stroke-width="0.9"/><path d="M415.5 118.5 H411 V116.5 L406.5 120 L411 123.5 V121.5 H415.5 Z" fill="#8CB8F0" stroke="#3A68B0" stroke-width="0.9"/><rect x="423.5" y="112.5" width="9" height="5" fill="#F2DC84" stroke="#A89030" stroke-width="0.9"/><path d="M434 121.5 L438.5 125" stroke="#7A8AA0" stroke-width="2"/><circle cx="431.5" cy="118.5" r="3.8" fill="#C8DCF8" stroke="#4A6A9A" stroke-width="1"/><rect x="452.5" y="112.5" width="9" height="5" fill="#F2DC84" stroke="#A89030" stroke-width="0.9"/><path d="M445.5 118.5 H450 V116.5 L454.5 120 L450 123.5 V121.5 H445.5 Z" fill="#8CB8F0" stroke="#3A68B0" stroke-width="0.9"/><rect x="469.5" y="112.5" width="9" height="5" fill="#F2DC84" stroke="#A89030" stroke-width="0.9"/><rect x="478" y="118" width="1" height="1" fill="#555"/><rect x="479" y="119" width="1" height="1" fill="#555"/><rect x="480" y="120" width="1" height="1" fill="#555"/><rect x="475.5" y="120.5" width="9.5" height="5" fill="#C8C8C0" stroke="#80807A" stroke-width="0.9"/><path d="M501.5 111.5 H506 L509 114.2 L506 117 H501.5 Z" fill="#7ACCC0" stroke="#3A8A88" stroke-width="0.9"/><rect x="505" y="118" width="1" height="1" fill="#555"/><rect x="506" y="119" width="1" height="1" fill="#555"/><rect x="507" y="120" width="1" height="1" fill="#555"/><path d="M505.5 119.5 H510 L513 122.2 L510 125 H505.5 Z" fill="#C8C8C0" stroke="#80807A" stroke-width="0.9"/><path d="M523.5 119.5 H528 V117.5 L532.5 121 L528 124.5 V122.5 H523.5 Z" fill="#F2DC84" stroke="#A89030" stroke-width="0.9"/><path d="M531.5 111.5 H536 L539 114.2 L536 117 H531.5 Z" fill="#7ACCC0" stroke="#3A8A88" stroke-width="0.9"/><path d="M546.5 111.5 H551 L554 114.2 L551 117 H546.5 Z" fill="#7ACCC0" stroke="#3A8A88" stroke-width="0.9"/><path d="M561.5 119.5 H557 V117.5 L552.5 121 L557 124.5 V122.5 H561.5 Z" fill="#F2DC84" stroke="#A89030" stroke-width="0.9"/><rect x="584.5" y="111.5" width="6" height="3" fill="#E8E8E0" stroke="#80807A" stroke-width="0.9"/><path d="M577.5 119.5 H582 V117.5 L586.5 121 L582 124.5 V122.5 H577.5 Z" fill="#F2DC84" stroke="#A89030" stroke-width="0.9"/><rect x="587" y="116" width="1" height="1" fill="#555"/><rect x="588" y="118" width="1" height="1" fill="#555"/><rect x="589" y="120" width="1" height="1" fill="#555"/><rect x="586.5" y="122.5" width="6" height="3" fill="#70C070" stroke="#308030" stroke-width="0.9"/><rect x="600.5" y="111.5" width="6.5" height="3" fill="#70C070" stroke="#308030" stroke-width="0.9"/><path d="M616.0 115.5 H611.5 V113.5 L607.0 117 L611.5 120.5 V118.5 H616.0 Z" fill="#F2DC84" stroke="#A89030" stroke-width="0.9"/><rect x="604" y="116" width="1" height="1" fill="#555"/><rect x="605" y="118" width="1" height="1" fill="#555"/><rect x="602.5" y="121.5" width="6.5" height="3.5" fill="#E8E8E0" stroke="#80807A" stroke-width="0.9"/><path d="M632.5 115.5 L636 112 V114 H640 V117 H636 V119 Z" fill="#F0A080" stroke="#C04828" stroke-width="0.9"/><path d="M641 112.5 H646 M641 114.5 H646 M641 116.5 H646 M641 118.5 H646" stroke="#E09040" stroke-width="1"/><path d="M632 121.5 H646 M632 123.5 H646" stroke="#8C9CB0" stroke-width="1"/><path d="M663.5 115.5 L660 112 V114 H656 V117 H660 V119 Z" fill="#F0A080" stroke="#C04828" stroke-width="0.9"/><path d="M664 112.5 H669 M664 114.5 H669 M664 116.5 H669 M664 118.5 H669" stroke="#E09040" stroke-width="1"/><path d="M656 121.5 H670 M656 123.5 H670" stroke="#8C9CB0" stroke-width="1"/><circle cx="693" cy="118.7" r="5" fill="#EC9070" stroke="#D06A48" stroke-width="1"/><defs><linearGradient id="sq" x1="0" y1="0" x2="1" y2="1"><stop offset="0" stop-color="#F0F0F0"/><stop offset="1" stop-color="#A8A8A8"/></linearGradient></defs><rect x="711" y="114" width="9.5" height="9.5" fill="url(#sq)" stroke="#808080" stroke-width="1"/><path d="M742 118.5 L745 112.5 M745.5 118.5 L748.5 112.5" stroke="#4AA048" stroke-width="2"/><path d="M741 119.5 H754 M741 121.5 H754 M741 123.5 H754" stroke="#A8A8A0" stroke-width="1"/><path d="M772 118.5 H778 M763.5 120.5 H778 M763.5 122.5 H778 M763.5 124.5 H778" stroke="#000" stroke-width="1.2"/></svg>
<div class="a" style="left:3px;top:488px;width:1018px;height:202px;background:#ECE9D8;border:1px solid #8D8D8D;"></div>
<div class="a" style="left:4px;top:686px;width:1014px;height:1px;background:#A8A8A0;"></div>
<div class="a" style="left:1017px;top:530px;width:1px;height:157px;background:#A8A8A0;"></div>
<div class="a" style="left:4px;top:489px;width:1016px;height:18px;background:linear-gradient(#F6FBFC,#E8ECF8 30%,#E2E4F6 55%,#DADCF4 75%,#CCDCF4 90%,#C4D4EC);"></div>
<div class="a" style="left:4px;top:507px;width:1016px;height:1px;background:#8C9CAC;"></div>
<div class="a" style="left:6px;top:493px;width:2px;height:2px;background:#A6A6A0;border-radius:1px;"></div>
<div class="a" style="left:6px;top:497px;width:2px;height:2px;background:#A6A6A0;border-radius:1px;"></div>
<div class="a" style="left:6px;top:501px;width:2px;height:2px;background:#A6A6A0;border-radius:1px;"></div>
<div class="t" style="left:11px;top:492.44px;font-size:12px;font-weight:700;color:#000;letter-spacing:-0.255px;">Output</div>
<svg style="left:993px;top:493px" width="24" height="10"><rect x="2.5" y="2.5" width="5" height="5" fill="none" stroke="#111" stroke-width="1.2"/><rect x="4.2" y="4.2" width="1.6" height="1.6" fill="#111"/><path d="M15 2 L20.5 8 M20.5 2 L15 8" stroke="#111" stroke-width="1.2"/></svg>
<div class="a" style="left:4px;top:529px;width:1014px;height:120px;background:#FFFFFF;border-top:1px solid #8D8D8D;border-right:1px solid #A8A8A8;border-bottom:1px solid #A8A8A8;"></div>
<div class="a" style="left:6px;top:511px;width:142px;height:19px;background:linear-gradient(#F8F8F5,#EEEDE6 60%,#E3E1D7);border:1px solid #8D8D8D;border-bottom:none;border-radius:3px 3px 0 0;"></div>
<div class="t" style="left:11.7px;top:515.14px;font-size:12px;font-weight:700;color:#000;letter-spacing:-0.072px;">Exercicio04list2 (run)</div>
<svg style="left:137px;top:517px" width="7" height="7"><path d="M0.7 0.7 L5.8 5.8 M5.8 0.7 L0.7 5.8" stroke="#333" stroke-width="1.1"/></svg>
<div class="a" style="left:147px;top:509px;width:145px;height:21px;background:#FFFFFF;border-left:1px solid #8D8D8D;border-right:1px solid #8D8D8D;"></div>
<div class="a" style="left:147px;top:509px;width:145px;height:3px;background:linear-gradient(#F0C068,#E8A93A);border-radius:2px 2px 0 0;"></div>
<div class="t" style="left:153.8px;top:512.74px;font-size:12px;font-weight:700;color:#000;letter-spacing:-0.081px;">Exercicio04list2 (run)</div>
<svg style="left:281px;top:516px" width="7" height="7"><path d="M0.7 0.7 L5.8 5.8 M5.8 0.7 L0.7 5.8" stroke="#333" stroke-width="1.1"/></svg>
<div class="o" style="left:9.7px;top:533.80px">C&oacute;digo...: 8</div>
<div class="o" style="left:9.7px;top:549.80px">Nome...: Marcia</div>
<div class="o" style="left:9.7px;top:565.80px">Email...: marcia</div>
<div class="o" style="left:9.7px;top:581.80px">Digite o c&oacute;digo do cliente que deseja excluir</div>
<div class="o" style="left:9.7px;top:597.80px">Codigo</div>
<div class="o" style="left:9.7px;top:613.80px">        <span class="lnk">at exercicio04list2.ClienteDao.inserir(ClienteDao.java:12) </span></div>
<div class="o" style="left:9.7px;top:629.80px">        <span class="lnk">at exercicio04list2.Main.main(Main.java:15) </span></div>
<div class="a" style="left:1001px;top:531px;width:15px;height:117px;background:linear-gradient(90deg,#F4F3EE,#FCFCFA);"></div>
<svg style="left:1001px;top:534px" width="15" height="16"><rect x="0.5" y="0.5" width="14" height="15" rx="2" fill="#C5D5F8" stroke="#B0C3EC"/><path d="M4 9.5 L7.5 6 L11 9.5" fill="none" stroke="#4D6185" stroke-width="1.8"/></svg>
<svg style="left:1001px;top:610px" width="15" height="20"><rect x="0.5" y="0.5" width="14" height="19" rx="2" fill="#C5D5F8" stroke="#B0C3EC"/><path d="M4 6.5 H11 M4 8.5 H11 M4 10.5 H11 M4 12.5 H11" stroke="#8CA4D8" stroke-width="0.8"/></svg>
<svg style="left:1001px;top:631px" width="15" height="16"><rect x="0.5" y="0.5" width="14" height="15" rx="2" fill="#C5D5F8" stroke="#B0C3EC"/><path d="M4 6.5 L7.5 10 L11 6.5" fill="none" stroke="#4D6185" stroke-width="1.8"/></svg>
<div class="t" style="left:10px;top:662.09px;font-size:11px;font-weight:400;color:#000;letter-spacing:0.146px;">Input</div>
<div class="a" style="left:44px;top:657px;width:879px;height:20px;background:#FFFFFF;border:1px solid #A0A0A0;"></div>
<div class="a" style="left:46px;top:659px;width:111px;height:16px;background:#316AC5;"></div>
<div class="t" style="left:47px;top:661.69px;font-size:11px;font-weight:400;color:#FFFFFF;letter-spacing:-0.262px;">vera.lucia@gamail.com</div>
<div class="a" style="left:927px;top:657px;width:85px;height:21px;background:linear-gradient(#FFFFFF,#F3F3EF 60%,#DCDAD0);border:1px solid #2C3E58;border-radius:3px;"></div>
<div class="t" style="left:941px;top:661.69px;font-size:11px;font-weight:400;color:#000;letter-spacing:0.031px;">Close Input</div>
<div class="a" style="left:4px;top:692px;width:63px;height:21px;background:linear-gradient(#FFFFFF,#F7F7F4 70%,#ECEBE4);border:1px solid #9C9C94;border-radius:3px;"></div>
<svg style="left:10px;top:694px" width="16" height="16"><rect x="0.5" y="0.5" width="13" height="11" fill="#FFFFFF" stroke="#2E4C7A"/><rect x="1" y="1" width="12" height="2" fill="#5A88D0"/><ellipse cx="9.5" cy="11.5" rx="5" ry="3.6" fill="#F0D070" stroke="#B08A30" stroke-width="0.8"/><path d="M7 11 H12 M7.5 13 H11.5" stroke="#B08A30" stroke-width="0.8"/><path d="M7 7 V9" stroke="#2E4C7A"/></svg>
<div class="t" style="left:27.8px;top:696.99px;font-size:11px;font-weight:400;color:#000;letter-spacing:0.028px;">Output</div>
<div class="a" style="left:0px;top:714px;width:1023px;height:1px;background:#ACA899;"></div>
<div class="a" style="left:0px;top:715px;width:1023px;height:1px;background:#FFFFFF;"></div>
<div class="t" style="left:3.4px;top:721.49px;font-size:11px;font-weight:400;color:#000;letter-spacing:-0.120px;">Building Exercicio04list2 (run)...</div>
</body></html>
